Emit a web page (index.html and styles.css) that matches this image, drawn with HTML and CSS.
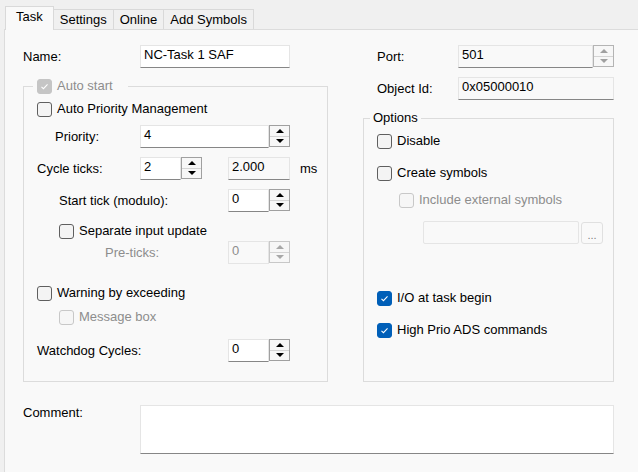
FILE: index.html
```html
<!DOCTYPE html>
<html lang="en">
<head>
<meta charset="UTF-8">
<title>Task</title>
<link rel="stylesheet" href="styles.css">
</head>
<body>
<div class="tabs">
    <div class="tab active">Task</div>
    <div class="tab">Settings</div>
    <div class="tab">Online</div>
    <div class="tab">Add Symbols</div>
</div>

<div class="page">
    <div class="cols">
        <div class="col-left">
            <div class="row">
                <span class="lbl w117">Name:</span>
                <div class="edit w150">NC-Task 1 SAF</div>
            </div>

            <fieldset class="group">
                <legend class="legend-chk"><span class="cb on dis"><svg viewBox="0 0 15 15"><path d="M4 7.8 6.3 10 11 5"/></svg></span><span class="dis-txt">Auto start</span></legend>
                <div class="group-body">
                    <div class="chk-row"><span class="cb"></span>Auto Priority Management</div>

                    <div class="row mt8">
                        <span class="lbl w103 in18">Priority:</span>
                        <div class="spin w150"><div class="edit">4</div><div class="spin-btns"><span class="up"></span><span class="down"></span></div></div>
                    </div>

                    <div class="row mt9">
                        <span class="lbl w103">Cycle ticks:</span>
                        <div class="spin w62"><div class="edit">2</div><div class="spin-btns"><span class="up"></span><span class="down"></span></div></div>
                        <div class="edit ro w62 ml26">2.000</div>
                        <span class="unit">ms</span>
                    </div>

                    <div class="row mt9">
                        <span class="lbl w191 in22">Start tick (modulo):</span>
                        <div class="spin w62"><div class="edit">0</div><div class="spin-btns"><span class="up"></span><span class="down"></span></div></div>
                    </div>

                    <div class="chk-row mt11 in22"><span class="cb"></span>Separate input update</div>

                    <div class="row mt2">
                        <span class="lbl w191 in68 dis-txt">Pre-ticks:</span>
                        <div class="spin w62 off"><div class="edit">0</div><div class="spin-btns"><span class="up"></span><span class="down"></span></div></div>
                    </div>

                    <div class="chk-row mt21"><span class="cb"></span>Warning by exceeding</div>
                    <div class="chk-row mt8 in22"><span class="cb dis"></span><span class="dis-txt">Message box</span></div>

                    <div class="row mt14">
                        <span class="lbl w191">Watchdog Cycles:</span>
                        <div class="spin w62"><div class="edit">0</div><div class="spin-btns"><span class="up"></span><span class="down"></span></div></div>
                    </div>
                </div>
            </fieldset>
        </div>

        <div class="col-right">
            <div class="row">
                <span class="lbl w95 in14">Port:</span>
                <div class="spin w156 ro-spin"><div class="edit ro">501</div><div class="spin-btns"><span class="up"></span><span class="down"></span></div></div>
            </div>
            <div class="row mt9">
                <span class="lbl w95 in14">Object Id:</span>
                <div class="edit ro w156">0x05000010</div>
            </div>

            <fieldset class="group options">
                <legend class="legend-txt">Options</legend>
                <div class="group-body">
                    <div class="chk-row"><span class="cb"></span>Disable</div>
                    <div class="chk-row mt16"><span class="cb"></span>Create symbols</div>
                    <div class="chk-row mt11 in22"><span class="cb dis"></span><span class="dis-txt">Include external symbols</span></div>
                    <div class="row mt13 in46">
                        <div class="edit off w156"></div>
                        <div class="dots">...</div>
                    </div>
                    <div class="chk-row mt46"><span class="cb on"><svg viewBox="0 0 15 15"><path d="M4 7.8 6.3 10 11 5"/></svg></span>I/O at task begin</div>
                    <div class="chk-row mt16"><span class="cb on"><svg viewBox="0 0 15 15"><path d="M4 7.8 6.3 10 11 5"/></svg></span>High Prio ADS commands</div>
                </div>
            </fieldset>
        </div>
    </div>

    <div class="comment-row">
        <span class="lbl w117">Comment:</span>
        <div class="edit memo"></div>
    </div>
</div>
</body>
</html>
```

FILE: styles.css
```css
body{margin:0;background:#f0f0f0;font:13px/16px "Liberation Sans",Arial,sans-serif;color:#000}

/* tab strip */
.tabs{display:flex;align-items:flex-end;height:29px;padding-left:5px}
.tab{height:20px;box-sizing:border-box;padding:2px 6px 0;border:1px solid #d9d9d9;border-bottom:none;border-right:none;background:#f0f0f0;white-space:nowrap}
.tab:last-child{border-right:1px solid #d9d9d9}
.tab.active{height:24px;margin-bottom:-1px;padding:2px 10px 0;background:#f9f9f9;border-right:1px solid #d9d9d9;position:relative}
.tab.active + .tab{border-left:none}

/* page */
.page{margin-left:4px;height:443px;box-sizing:border-box;padding:15px 0 0 18px;background:#f9f9f9;border-left:1px solid #dcdcdc;border-top:1px solid #dcdcdc}
.cols{display:flex;gap:35px}
.col-left{width:305px}
.col-right{width:251px;display:flex;flex-direction:column}

.row{display:flex;align-items:center;height:23px}
.chk-row{display:flex;align-items:center;height:16px;white-space:nowrap}
.lbl{flex:none;box-sizing:border-box;white-space:nowrap}

.w62{width:62px}
.w95{width:95px}
.w103{width:103px}
.w117{width:117px}
.w150{width:150px}
.w156{width:156px}
.w191{width:191px}
.in14{padding-left:14px}
.in18{padding-left:18px}
.in22{padding-left:22px}
.in46{padding-left:46px}
.in68{padding-left:68px}
.ml26{margin-left:26px}
.mt2{margin-top:2px}
.mt8{margin-top:8px}
.mt9{margin-top:9px}
.mt11{margin-top:11px}
.mt13{margin-top:13px}
.mt14{margin-top:14px}
.mt16{margin-top:16px}
.mt21{margin-top:21px}
.mt46{margin-top:46px}

/* edit boxes */
.edit{flex:none;box-sizing:border-box;height:23px;padding:1px 3px 0;background:#fff;border:1px solid #e5e5e5;border-bottom-color:#868686;white-space:nowrap;overflow:hidden}
.edit.ro{background:#f9f9f9}
.edit.off{background:#f9f9f9;border-color:#e5e5e5;border-radius:2px}
.unit{margin-left:10px}

.spin{flex:none;display:flex;height:23px}
.spin .edit{flex:1;min-width:0}
.spin-btns{width:21px;height:22px;box-sizing:border-box;border:1px solid #a0a0a0;background:#f7f7f7;display:flex;flex-direction:column}
.spin-btns span{flex:1;display:flex;align-items:center;justify-content:center}
.spin-btns .up{border-bottom:1px solid #d4d4d4}
.spin-btns .up::after{content:"";border-left:4px solid transparent;border-right:4px solid transparent;border-bottom:4px solid #000}
.spin-btns .down::after{content:"";border-left:4px solid transparent;border-right:4px solid transparent;border-top:4px solid #000}
.ro-spin .spin-btns{border-color:#b4b4b4}
.ro-spin .spin-btns .up::after{border-bottom-color:#a0a0a0}
.ro-spin .spin-btns .down::after{border-top-color:#a0a0a0}
.spin.off .edit{background:#f9f9f9;border-color:#e5e5e5;color:#8d8d8d}
.spin.off .spin-btns{border-color:#c8c8c8}
.spin.off .spin-btns .up::after{border-bottom-color:#a8a8a8}
.spin.off .spin-btns .down::after{border-top-color:#a8a8a8}

.dots{flex:none;box-sizing:border-box;width:22px;height:22px;margin-left:2px;border:1px solid #e0e0e0;border-radius:3px;color:#808080;font-size:11px;line-height:24px;text-align:center}
.memo{width:474px;height:49px}

/* group boxes */
.group{margin:10px 0 0;padding:0;min-width:0;border:1px solid #dcdcdc}
.group-body{padding:7px 0 19px 13px}
.options{flex:1}
.legend-chk{display:flex;align-items:center;height:16px;margin-left:9px;padding:0 15px 0 4px;white-space:nowrap}
.legend-txt{height:16px;margin-left:6px;padding:0 3px}

/* checkboxes */
.cb{flex:none;box-sizing:border-box;width:15px;height:15px;margin-right:5px;border:1px solid #5f5f5f;border-radius:3px;background:#f4f4f4;display:flex}
.cb svg{width:13px;height:13px;fill:none;stroke:#fff;stroke-width:1.2}
.cb.dis{border-color:#c8c8c8;background:#f6f6f6}
.cb.on{background:#005fb8;border-color:#005fb8}
.cb.on.dis{background:#c5c5c5;border-color:#c5c5c5}
.dis-txt{color:#8d8d8d}

.comment-row{display:flex;align-items:flex-start;margin-top:23px}
```
